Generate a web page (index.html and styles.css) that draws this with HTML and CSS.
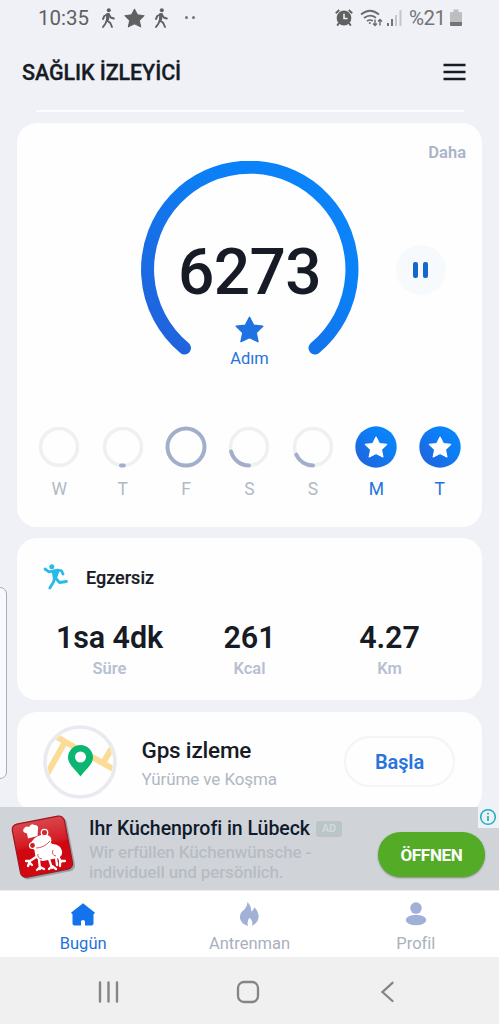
FILE: index.html
```html
<!DOCTYPE html>
<html lang="tr">
<head>
<meta charset="utf-8">
<title>Sağlık İzleyici</title>
<link rel="stylesheet" href="styles.css">
</head>
<body>
<svg width="0" height="0" class="defs">
  <defs>
    <linearGradient id="blue" x1="0" y1="1" x2="1" y2="0">
      <stop offset="0" stop-color="#2260da"/><stop offset=".65" stop-color="#0b80f6"/><stop offset="1" stop-color="#0c86fa"/>
    </linearGradient>
    <linearGradient id="red" x1="0" y1="0" x2="0" y2="1">
      <stop offset="0" stop-color="#d9474c"/><stop offset=".42" stop-color="#d51c25"/><stop offset=".5" stop-color="#cf0711"/><stop offset="1" stop-color="#d30711"/>
    </linearGradient>
    <clipPath id="mapClip"><circle cx="37" cy="37" r="33"/></clipPath>
    <symbol id="star" viewBox="0 0 28 26"><path d="M14 1.200 17.900 8.800 26.800 9.900 20.400 16 22.200 24.800 14 20.800 5.800 24.800 7.600 16 1.200 9.900 10.100 8.800Z" fill="currentColor" stroke="currentColor" stroke-width="1.400" stroke-linejoin="round"/></symbol>
    <symbol id="walk" viewBox="0 0 14 20"><circle cx="7.800" cy="2.300" r="2" fill="currentColor"/><path d="M7 6 5.800 12.200 9.300 15 11 19M5.800 12 4.500 15.500 2 19M7 6 3.300 8 2 11M8 6.500 9.700 9.500 12.800 10.500" fill="none" stroke="currentColor" stroke-width="1.900" stroke-linejoin="round" stroke-linecap="round"/><path d="M5.500 5 8.800 5.500 8 12 5 12Z" fill="currentColor"/></symbol>
  </defs>
</svg>
<div class="screen">
  <header class="status">
    <span class="clock">10:35</span>
    <svg class="walk" width="14" height="20"><use href="#walk"/></svg>
    <svg class="status-star" width="21" height="20"><use href="#star"/></svg>
    <svg class="walk" width="14" height="20"><use href="#walk"/></svg>
    <span class="dots"><i></i><i></i></span>
    <span class="status-right">
      <svg width="18" height="18" viewBox="0 0 18 18"><circle cx="9" cy="9" r="7.400" fill="#5f6062"/><path d="M.8 4.300 4.300 1M17.200 4.300 13.700 1M4 14 2.200 16.600M14 14l1.800 2.600" stroke="#5f6062" stroke-width="1.900"/><path d="M9 4.800V9.500h3.500" fill="none" stroke="#eff1f6" stroke-width="1.600"/></svg>
      <svg class="wifi" width="23" height="18" viewBox="0 0 23 18" fill="none" stroke="#6a6b6d" stroke-width="1.700"><path d="M1 5.500Q10 -2 19 5.500M4 9q6-4.600 12-.3M7 12.200q3-2.300 5.800-.2"/><circle cx="9.800" cy="14" r="1" fill="#6a6b6d" stroke="none"/><path d="M15 10.500v6M13 14.500l2 2 2-2M20 16.500v-6M18 12.500l2-2 2 2" stroke-width="1.400"/></svg>
      <svg class="signal" width="16" height="18" viewBox="0 0 16 18"><path d="M1 14h2v3H1zM5 10h2v7H5z" fill="#717274"/><path d="M9 6h2v11H9zM13.500 1h2v16h-2z" fill="#c5c6c9"/></svg>
      <span class="percent">%21</span>
      <svg width="12" height="18" viewBox="0 0 12 18"><path d="M3.500.500h5V3H11q1 0 1 1v9H0V4q0-1 1-1h2.500Z" fill="#bdbec0"/><path d="M0 13h12v3q0 1-1 1H1q-1 0-1-1Z" fill="#737476"/></svg>
    </span>
  </header>
  <div class="titlebar">
    <h1>SAĞLIK İZLEYİCİ</h1>
    <svg class="menu" width="23" height="18" viewBox="0 0 23 18"><path d="M.5 2h22M.5 9h22M.5 16h22" stroke="#171b25" stroke-width="2.600"/></svg>
  </div>
  <main>
    <div class="divider"></div>
    <section class="card steps">
      <span class="more">Daha</span>
      <div class="gauge-row">
        <div class="gauge">
          <svg width="218" height="200" viewBox="0 0 218 200"><path d="M43.500 187A102.200 102.200 0 1 1 174 187" fill="none" stroke="url(#blue)" stroke-width="13" stroke-linecap="round"/></svg>
          <div class="gauge-text">
            <strong>6273</strong>
            <svg width="29" height="27"><use href="#star"/></svg>
            <span>Adım</span>
          </div>
        </div>
        <span class="pause"><i></i><i></i></span>
      </div>
      <div class="week">
        <div class="day"><svg width="42" height="42" viewBox="-21 -21 42 42"><circle class="track" r="18.500"/></svg>W</div>
        <div class="day"><svg width="42" height="42" viewBox="-21 -21 42 42"><circle class="track" r="18.500"/><path class="part" d="M.8 18.500H-2"/></svg>T</div>
        <div class="day"><svg width="42" height="42" viewBox="-21 -21 42 42"><circle class="part" r="18.500"/></svg>F</div>
        <div class="day"><svg width="42" height="42" viewBox="-21 -21 42 42"><circle class="track" r="18.500"/><path class="part" d="M0 18.500A18.500 18.500 0 0 1-17.900 4.500"/></svg>S</div>
        <div class="day"><svg width="42" height="42" viewBox="-21 -21 42 42"><circle class="track" r="18.500"/><path class="part" d="M0 18.500A18.500 18.500 0 0 1-16.800 7.700"/></svg>S</div>
        <div class="day done"><svg width="42" height="42" viewBox="0 0 42 42"><circle cx="21" cy="21" r="20.700" fill="url(#blue)"/><g color="#fff"><use href="#star" x="9.300" y="10" width="23.500" height="22"/></g></svg>M</div>
        <div class="day done"><svg width="42" height="42" viewBox="0 0 42 42"><circle cx="21" cy="21" r="20.700" fill="url(#blue)"/><g color="#fff"><use href="#star" x="9.300" y="10" width="23.500" height="22"/></g></svg>T</div>
      </div>
    </section>
    <section class="card exercise">
      <h2><svg width="26" height="26" viewBox="0 0 26 26" fill="none" stroke="#29b9ea" stroke-width="2.800" stroke-linejoin="round" stroke-linecap="round"><circle cx="8.800" cy="2.800" r="2.500" fill="#29b9ea" stroke="none"/><path d="M2 5 6 7.800 14.500 6 18.500 6.800 20 10"/><path d="M14 7 12 13.500 16.500 18.500 23.500 17.500"/><path d="M11.500 14.500 10.500 18 6.800 24"/><path d="M9.500 7.500 15.500 7.500 13 15 10.500 14Z" fill="#29b9ea" stroke-width="1.500"/></svg>Egzersiz</h2>
      <div class="stats">
        <div><strong>1sa 4dk</strong><span>Süre</span></div>
        <div><strong>261</strong><span>Kcal</span></div>
        <div><strong>4.27</strong><span>Km</span></div>
      </div>
    </section>
    <section class="card gps">
      <svg width="74" height="74" viewBox="0 0 74 74"><circle cx="37" cy="37" r="35" fill="#fefefe" stroke="#e9e9f0" stroke-width="3.600"/><g clip-path="url(#mapClip)" fill="none" stroke="#fcdb96" stroke-width="6"><path d="M12 11 72 45M22 17 4 49M60 38 70 21"/></g><path d="M37.500 51.500C33 45 25 39.500 25 32.500a12.500 12.500 0 0 1 25 0C50 39.500 42 45 37.500 51.500Z" fill="#0bb673"/><circle cx="37.500" cy="32" r="5.500" fill="#fff"/></svg>
      <div class="gps-text"><h3>Gps izleme</h3><p>Yürüme ve Koşma</p></div>
      <span class="start">Başla</span>
    </section>
    <div class="edge-panel"></div>
  </main>
  <aside class="ad">
    <svg class="ad-logo" width="66" height="68" viewBox="0 0 66 68">
      <g transform="rotate(-11 33 34)">
        <rect x="7" y="8" width="54" height="55" rx="6" fill="#777b80" opacity=".6"/>
        <rect x="6" y="6.500" width="53" height="54" rx="5.500" fill="url(#red)" stroke="#9d171e" stroke-width="1.200"/>
      </g>
      <g fill="#fff">
        <path d="M17 20.500Q12 19.500 13.500 16 16 12.500 19 14 21 10 24.500 12 29 12 28 17L27.500 23 18 25.500Z"/>
        <ellipse cx="31" cy="29.500" rx="11" ry="7" transform="rotate(-24 31 29.500)"/>
        <path d="M24 34 38 25Q41 31 43 31 51 32 52 38 53 43 48 45L33 48Q25 47 25 41Z"/>
      </g>
      <path d="M26 44 20 48 18 53M20 48 16 48M19 49 22 52M29 47 30 56M30 54 27 57M30 54 34 56M39 46 42 55M42 53 39 56M42 53 46 56M48 43 51 49M50 48 55 48M50 49 50 53M46 45 47 52" fill="none" stroke="#fff" stroke-width="2.300" stroke-linecap="round"/>
      <circle cx="34.500" cy="19.500" r="3.200" fill="#d8252d" stroke="#fff" stroke-width="1.300"/><circle cx="22.500" cy="32.500" r="3" fill="#c91e28" stroke="#fff" stroke-width="1.200"/>
      <path d="M26 35q8 0 14-7M28 41q-1 4 4 5M43 37q-2 5 3 6" fill="none" stroke="#ce3039" stroke-width=".8"/>
    </svg>
    <div class="ad-text">
      <h4><span>Ihr Küchenprofi in Lübeck</span><b>AD</b></h4>
      <p>Wir erfüllen Küchenwünsche -<br>individuell und persönlich.</p>
    </div>
    <span class="open">ÖFFNEN</span>
    <span class="info"><svg width="18" height="18" viewBox="0 0 18 18" fill="none" stroke="#27abc0" stroke-width="1.500"><circle cx="9" cy="9" r="7.300"/><path d="M9 8v5M9 4.800v1.700" stroke-width="1.700"/></svg></span>
  </aside>
  <nav class="tabs">
    <div class="active"><svg width="26" height="24" viewBox="0 0 26 24"><path d="M13 .800 25 10.300 24 11.500H23.500V21q0 2-2 2H15v-4q0-1.500-2-1.500t-2 1.500v4H4.500q-2 0-2-2v-9.500H2L1 10.300Z" fill="#1273ec"/></svg>Bugün</div>
    <div><svg width="26" height="26" viewBox="0 0 26 26"><path d="M11.500 0C15 4 15.500 7 15 10Q18 9 18.500 5.500 22.500 9 23 15 23 21 16 25 18 20 13.500 16.500 10.500 20 12 25 4 22 3.500 16 3.500 11 8 8 11.500 4 11.500 0Z" fill="#a1b0d6"/></svg>Antrenman</div>
    <div><svg width="26" height="26" viewBox="0 0 26 26"><circle cx="13" cy="6.300" r="6" fill="#a1b0d6"/><ellipse cx="13" cy="18.800" rx="10.700" ry="5.500" fill="#a1b0d6"/></svg>Profil</div>
  </nav>
  <footer class="system">
    <svg width="22" height="22" viewBox="0 0 22 22"><path d="M3 1.500v19M11.500 1.500v19M20 1.500v19" fill="none" stroke="#858585" stroke-width="2.400" stroke-linecap="round"/></svg>
    <svg width="24" height="24" viewBox="0 0 24 24"><rect x="2" y="2" width="20" height="20" rx="6" fill="none" stroke="#858585" stroke-width="2.300"/></svg>
    <svg width="22" height="22" viewBox="0 0 22 22"><path d="M15.500 1.800 5.500 11l10 9" fill="none" stroke="#858585" stroke-width="2.300" stroke-linecap="round"/></svg>
  </footer>
</div>
</body>
</html>
```
FILE: styles.css
```css
* { box-sizing: border-box; }
body { margin: 0; font-family: Roboto, "Liberation Sans", sans-serif; color: #171b25; }
h1, h2, h3, h4, p { margin: 0; }
svg { display: block; flex: none; }
.defs { position: absolute; }
.screen { width: 499px; height: 1024px; display: flex; flex-direction: column; background: #eff1f6; overflow: hidden; }

.status { height: 36px; padding: 0 37px 1px 38px; display: flex; align-items: center; color: #5f6062; }
.clock { font-size: 20.500px; width: 63px; }
.status-star { margin: 0 9px 0 9px; }
.dots { display: flex; gap: 4px; margin-left: 17px; }
.dots i { width: 3px; height: 3px; border-radius: 50%; background: #747577; }
.status-right { margin-left: auto; display: flex; align-items: center; }
.wifi { margin-left: 7px; }
.signal { margin-left: 3px; }
.percent { font-size: 20.500px; width: 36px; margin: 0 5px 0 7px; letter-spacing: -.5px; color: #727375; }

.titlebar { height: 74px; padding: 0 33px 2px 22px; display: flex; align-items: center; justify-content: space-between; }
h1 { font-size: 21.500px; font-weight: 500; letter-spacing: -.1px; white-space: nowrap; -webkit-text-stroke: .3px; }

main { height: 697px; padding: 0 17px; display: flex; flex-direction: column; overflow: hidden; position: relative; }
.divider { flex: none; height: 2px; margin: 0 18px 11px 19px; background: #fbfcfe; }
.card { flex: none; background: #fefefe; border-radius: 20px; }
.steps { height: 404px; display: flex; flex-direction: column; }
.more { height: 38px; padding: 20px 16px 0 0; text-align: right; font-size: 16.500px; line-height: 20px; font-weight: 600; color: #aab3c9; }
.gauge-row { display: grid; grid-template-columns: 1fr 218px 1fr; height: 265px; }
.gauge { grid-column: 2; display: grid; }
.gauge > * { grid-area: 1 / 1; }
.gauge-text { display: flex; flex-direction: column; align-items: center; padding-top: 76px; color: #2874dc; }
.gauge-text strong { font-size: 64px; line-height: 72px; font-weight: 500; letter-spacing: -.6px; color: #171b25; }
.gauge-text svg { margin: 7px 0 6px; color: #1f72e2; }
.gauge-text span { font-size: 16.500px; line-height: 20px; }
.pause { width: 50px; height: 50px; margin: 84px 0 0 37px; border-radius: 50%; background: #f7fafd; display: flex; align-items: center; justify-content: center; gap: 5px; padding-right: 1px; }
.pause i { width: 5px; height: 16px; border-radius: 2px; background: #1766cb; }
.week { display: grid; grid-template-columns: repeat(7, 63.400px); justify-content: center; }
.day { display: flex; flex-direction: column; align-items: center; gap: 11px; font-size: 17.500px; line-height: 20px; color: #b2b9c6; }
.done { color: #2673d8; }
.track, .part { fill: none; stroke: #eff0f3; stroke-width: 3.500; }
.part { stroke: #a2afcb; stroke-width: 4; stroke-linecap: round; }

.exercise { height: 162px; margin-top: 11px; }
h2 { height: 79px; padding: 0 0 1px 26px; display: flex; align-items: center; gap: 17px; font-size: 18px; font-weight: 500; -webkit-text-stroke: .2px; }
.stats { display: grid; grid-template-columns: repeat(3, 140px); padding-left: 22.500px; text-align: center; }
.stats strong { display: block; font-size: 30.500px; line-height: 42px; font-weight: 600; letter-spacing: -.1px; white-space: nowrap; }
.stats span { display: block; font-size: 16.500px; line-height: 20px; font-weight: 600; color: #b7c0d2; }
.gps { height: 101px; margin-top: 12px; padding: 13px 27px 0 26px; display: flex; align-items: flex-start; }
.gps-text { margin: 11px 0 0 24.500px; flex: 1; white-space: nowrap; }
h3 { font-size: 22.500px; line-height: 29px; font-weight: 500; letter-spacing: -.2px; }
.gps-text p { font-size: 17px; line-height: 20px; margin-top: 4px; letter-spacing: -.1px; color: #b0b7c3; }
.start { width: 111px; height: 51px; margin-top: 11px; border: 2px solid #f3f4f6; border-radius: 26px; font-size: 20px; line-height: 49px; font-weight: 600; letter-spacing: -.1px; text-align: center; color: #2874dc; }
.edge-panel { position: absolute; left: -10px; top: 477px; width: 17px; height: 192px; border: 1px solid #abadb2; border-radius: 7px; background: #f7f9fe; }

.ad { height: 83px; display: flex; background: #d0d4d9; position: relative; }
.ad-logo { margin: 6px 0 0 10px; }
.ad-text { margin: 9px 0 0 13px; flex: 1; white-space: nowrap; }
h4 { display: flex; align-items: center; gap: 6px; font-size: 19.500px; line-height: 25px; font-weight: 500; letter-spacing: -.05px; color: #101b2c; }
h4 b { width: 26px; height: 16px; border-radius: 3px; background: #b9c5c8; color: #d1d9db; font-size: 11px; line-height: 16px; text-align: center; }
.ad-text p { margin-top: 2px; font-size: 17px; line-height: 19.500px; font-weight: 500; letter-spacing: -.15px; color: #b7bcc4; }
.open { width: 107px; height: 45px; margin: 25px 14px 0 0; border-radius: 23px; background: #54ac26; box-shadow: 0 1px 2px #7d8a7a; color: #fff; font-size: 17px; line-height: 46px; font-weight: 700; letter-spacing: -.3px; text-align: center; }
.info { position: absolute; right: 0; top: 0; width: 21px; height: 21px; padding: 1px; background: #edf2f5; }

.tabs { height: 67px; padding-top: 11px; display: grid; grid-template-columns: repeat(3, 1fr); background: #fff; border-top: 1px solid #e9ecef; }
.tabs div { display: flex; flex-direction: column; align-items: center; justify-content: flex-start; font-size: 16.500px; line-height: 20px; color: #a9b0bf; }
.tabs svg { height: 25px; margin-bottom: 7px; }
.tabs .active { color: #1e72dc; }
.system { height: 67px; padding-top: 2px; background: #f0f0f0; display: grid; grid-template-columns: 140px 140px 140px; padding-left: 38px; justify-items: center; align-items: center; }
```
